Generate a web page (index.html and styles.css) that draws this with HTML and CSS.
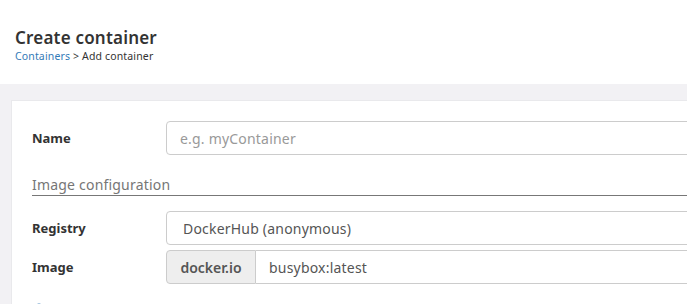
FILE: index.html
```html
<!DOCTYPE html>
<html lang="en">

<head>
    <meta charset="UTF-8">
    <meta name="viewport" content="width=device-width, initial-scale=1.0">
    <title>Create container</title>
    <link rel="stylesheet" href="styles.css">
</head>

<body>
    <header class="page-header">
        <h1 class="title">Create container</h1>
        <div class="crumbs"><a href="#" class="crumb-link">Containers</a> &gt; Add container</div>
    </header>

    <main class="content">
        <div class="card">
            <form class="form">
                <div class="row">
                    <label class="label">Name</label>
                    <input type="text" class="field" placeholder="e.g. myContainer">
                </div>

                <div class="section-title">Image configuration</div>

                <div class="row">
                    <label class="label">Registry</label>
                    <div class="field select">DockerHub (anonymous)</div>
                </div>
                <div class="row row-tight">
                    <label class="label">Image</label>
                    <div class="group">
                        <span class="addon">docker.io</span>
                        <input type="text" class="field group-field" value="busybox:latest">
                    </div>
                </div>
                <div class="more">
                    <svg class="more-icon" width="10" height="10" viewBox="0 0 10 10">
                        <circle cx="5" cy="5" r="4.5" fill="#337ab7" />
                    </svg>
                </div>
            </form>
        </div>
    </main>
</body>

</html>
```

FILE: styles.css
```css
html,
body {
    overflow: hidden;
    height: 304px;
}

body {
    margin: 0;
    padding: 0;
    background-color: #f2f1f4;
    font-family: "Noto Sans", "Open Sans", sans-serif;
    color: #333;
}

.page-header {
    background-color: #fff;
    height: 84px;
    padding: 0 15px;
    box-sizing: border-box;
    padding-top: 27px;
}

.title {
    margin: 0;
    font-size: 17px;
    font-weight: 600;
    color: #333;
    line-height: 22px;
    letter-spacing: 0.2px;
}

.crumbs {
    font-size: 10.5px;
    color: #333;
    line-height: 14px;
    letter-spacing: 0.15px;
}

.crumb-link {
    color: #337ab7;
    text-decoration: none;
}

.content {
    padding: 16px 0 0 11px;
}

.card {
    background-color: #fff;
    border-top: 1px solid #e9e9ec;
    border-left: 1px solid #e9e9ec;
    width: 800px;
    height: 300px;
    padding: 20px 0 0 20px;
    box-sizing: border-box;
}

/* form */
.form {
    display: flex;
    flex-direction: column;
}

.row {
    display: flex;
    align-items: center;
    margin-bottom: 15px;
}

.row-tight {
    margin-top: -10px;
}

.label {
    width: 134px;
    font-size: 13px;
    font-weight: 700;
    color: #333;
}

.field {
    width: 560px;
    height: 34px;
    box-sizing: border-box;
    border: 1px solid #ccc;
    border-radius: 4px;
    padding: 0 13px;
    font-family: inherit;
    font-size: 14px;
    color: #555;
    background-color: #fff;
    letter-spacing: 0.2px;
}

.field::placeholder {
    color: #999;
}

.select {
    display: flex;
    align-items: center;
    padding-left: 16px;
}

.section-title {
    font-size: 14px;
    color: #767676;
    border-bottom: 1px solid #777;
    padding-bottom: 0;
    margin: 5px 0 15px;
    line-height: 20px;
    letter-spacing: 0.2px;
}

.group {
    display: flex;
}

.addon {
    width: 90px;
    height: 34px;
    box-sizing: border-box;
    background-color: #eee;
    border: 1px solid #ccc;
    border-radius: 4px 0 0 4px;
    display: flex;
    align-items: center;
    justify-content: center;
    font-size: 14px;
    font-weight: 600;
    color: #555;
}

.group-field {
    border-left: 0;
    border-radius: 0 4px 4px 0;
    width: 470px;
}

.more {
    padding-top: 4px;
}

.more-icon {
    display: block;
    margin-left: 2px;
}
```
